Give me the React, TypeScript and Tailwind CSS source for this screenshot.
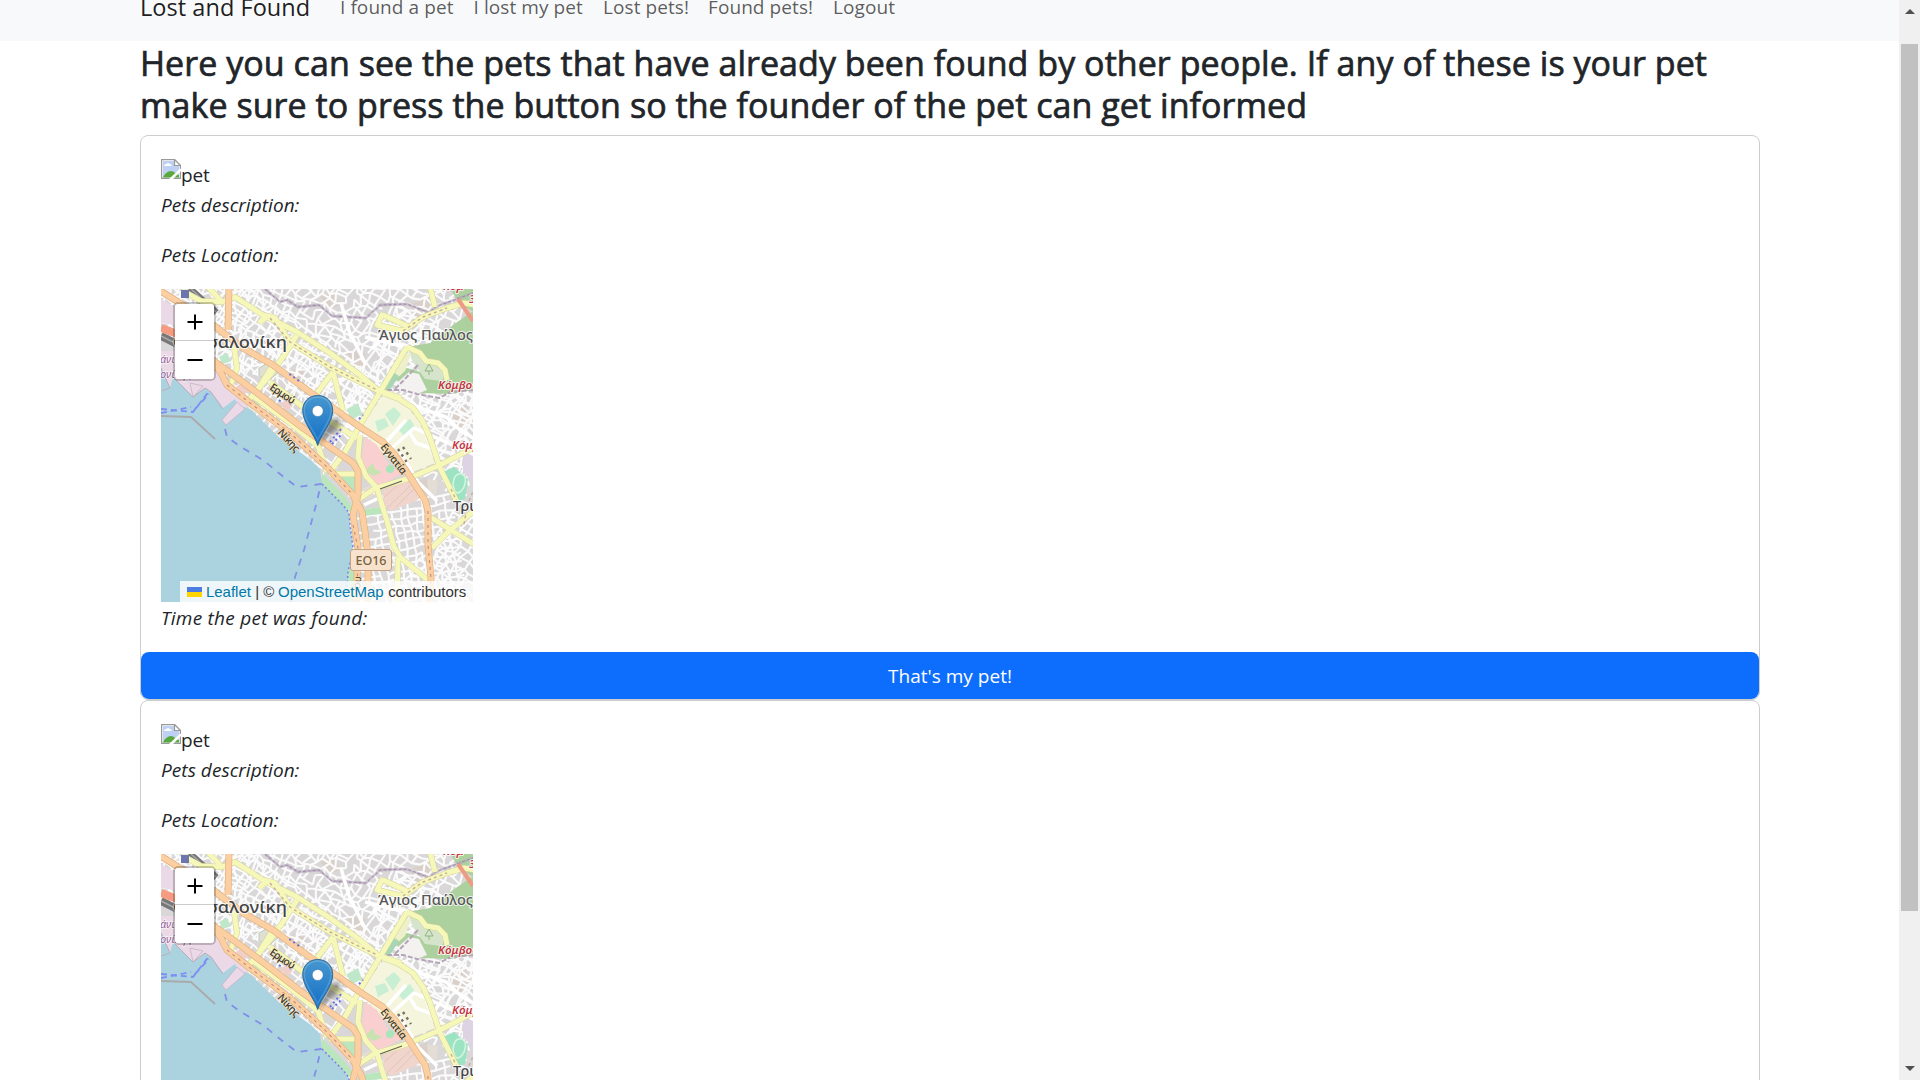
import React from "react";

const navLinks = [
  { label: "I found a pet", width: "w-[133.5px]" },
  { label: "I lost my pet", width: "w-[129.5px]" },
  { label: "Lost pets!", width: "w-[105px]" },
  { label: "Found pets!", width: "w-[125px]" },
  { label: "Logout", width: "w-[70px]" },
];

function makeRandom(seed: number) {
  let s = seed;
  return () => {
    s = (s * 1664525 + 1013904223) % 4294967296;
    return s / 4294967296;
  };
}

// Irregular street grid: jittered lattice points, rotated into place.
function streetGrid(cx: number, cy: number, w: number, h: number, angle: number, step: number, jitter: number, seed: number) {
  const rnd = makeRandom(seed);
  const cols = Math.ceil(w / step);
  const rows = Math.ceil(h / step);
  const a = (angle * Math.PI) / 180;
  const pts: string[][] = [];
  for (let r = 0; r <= rows; r++) {
    const row: string[] = [];
    for (let c = 0; c <= cols; c++) {
      const x = c * step - w / 2 + (rnd() - 0.5) * jitter;
      const y = r * step - h / 2 + (rnd() - 0.5) * jitter;
      row.push(`${(cx + x * Math.cos(a) - y * Math.sin(a)).toFixed(1)} ${(cy + x * Math.sin(a) + y * Math.cos(a)).toFixed(1)}`);
    }
    pts.push(row);
  }
  let d = "";
  for (let r = 0; r < rows; r++) {
    for (let c = 0; c < cols; c++) {
      if (rnd() > 0.14) d += `M${pts[r][c]}L${pts[r][c + 1]}`;
      if (rnd() > 0.14) d += `M${pts[r][c]}L${pts[r + 1][c]}`;
    }
  }
  return d;
}

const hillStreets = streetGrid(170, 30, 380, 170, 24, 7.5, 7, 11);
const centreStreets = streetGrid(120, 90, 190, 110, 35, 8, 3, 5);
const eastStreets = streetGrid(270, 110, 150, 130, 30, 8.5, 7, 23);
const southStreets = streetGrid(240, 270, 120, 110, -10, 7.5, 3, 41);
const southEastStreets = streetGrid(296, 275, 64, 110, 35, 8, 4, 17);

const trunkRoads = [
  "M-2 1L14 11L52 36L82 59L112 76L146 101L172 119L199 138L222 153L234 166L246 183L264 211L267 222L267 256L270 289L269 314",
  "M50 70L79 91L112 116L142 139L169 158L192 174L197 182L197 206L192 226L197 259L196 289L195 314",
  "M52 73L60 84L66 96L89 114L129 144L166 178L192 206L201 223L204 243L207 266L207 314",
  "M68 -2L67 41",
];

const yellowRoads = [
  "M47 -2L61 13L74 8L102 26L136 43L169 64L199 86L219 103",
  "M102 26L114 29L129 53L169 78L216 101L240 109",
  "M72 50L76 79L69 98",
  "M136 46L122 68L109 86L86 113",
  "M112 76L92 108",
  "M172 83L182 122M172 83L156 104",
  "M246 58L235 76L219 103L199 136L184 163L169 183",
  "M246 58L259 64L265 72L277 74L284 81L286 91",
  "M222 24L216 36L242 42L262 28L286 19L303 14L314 16M222 26L246 37",
  "M269 -2L274 18",
  "M222 104L238 110L252 119L262 133L269 149L279 179L296 213",
  "M216 199L246 190L279 176L314 158",
  "M199 146L197 168L205 187L216 199L221 216L226 232L233 258L240 269L267 291",
  "M168 185L197 185M198 210L216 198",
  "M314 221L287 243L271 259M269 228L314 256",
  "M236 314L237 269",
  "M92 107L129 134L157 157L166 183",
  "M109 93L142 118L168 132L196 149",
  "M22 2L40 12L60 13M105 28L98 34",
];

const avenues = ["M225 153L245 131M231 159L253 139L278 150L296 158L314 166", "M248 142L255 154L272 160L278 150", "M203 216L222 207M187 206L214 203", "M239 163L257 193L276 212", "M180 14L188 42L205 76M204 48L246 58M210 60L240 35", "M240 110L262 120L285 128L300 142L314 150"];

const boundary = "M104 0L119 13L126 11L137 18L158 16L171 27L205 29L219 16L246 15L269 24L274 18L312 4";

type MapProps = { clip: string; shifted?: boolean };

function StreetMap({ clip, shifted }: MapProps) {
  return (
    <svg className="block h-[313px] w-[312px]" viewBox="0 0 312 313">
      <defs>
        <clipPath id={clip}>
          <rect width="312" height="313" />
        </clipPath>
        <filter id={`${clip}-soft`} x="0" y="0" width="1" height="1">
          <feGaussianBlur stdDeviation="0.55" />
        </filter>
        <linearGradient id={`${clip}-pin`} x1="0" y1="0" x2="0" y2="1">
          <stop offset="0" stopColor="#4797cf" />
          <stop offset="1" stopColor="#126fc6" />
        </linearGradient>
        <filter id={`${clip}-shade`} x="-50%" y="-50%" width="200%" height="200%">
          <feGaussianBlur stdDeviation="2.5" />
        </filter>
      </defs>
      <g clipPath={`url(#${clip})`}>
        <g filter={`url(#${clip}-soft)`} fill="none" strokeLinejoin="round">
          <rect width="312" height="313" fill="#d9d7d7" />
          <g fill="#d9d0c9">
            <path d="M249 15l16-5 8 12-18 9zM128 84l10-6 8 8-10 7zM247 198l18-10 8 8-12 12zM160 8l12-5 8 13-12 4zM186 63l17 1 4 14-14 2zM290 122l14-7 8 20-14 8z" />
          </g>
          <g stroke="#fbfbfb">
            <path d={hillStreets} strokeWidth="2.1" />
            <path d={centreStreets} strokeWidth="1.9" />
            <path d={eastStreets} strokeWidth="2.1" />
            <path d={southStreets} strokeWidth="2.1" />
            <path d={southEastStreets} strokeWidth="2.1" />
          </g>
          <path d="M312 22L292 36L269 54L246 58L253 66L260 73L263 84L246 79L234 90L259 104L289 105L312 101ZM288 -2H314V24L298 14Z" fill="#add19e" />
          <path d="M246 58l14 7 5 9 12 2 7 9-3 7-17-2-12-17z" fill="#d6e4cb" />
          <path d="M238 92l10-9 10 2 8 16-10 4-18-4z" fill="#f3f2f1" />
          <path d="M241 66l9-2-6 18-11 10-4-3z" fill="#edf0c9" />
          <path d="M222 91l10-8 6 4-9 14-10 0z" fill="#a7d6b5" />
          <path d="M222 107l20 6 17 21 15 40-27 11-35-30-12-19z" fill="#f4f5dc" />
          <path d="M224 125l9-7 7 7-8 12zM214 132l10-3 4 8-11 6zM236 139l13-9 5 8-10 10z" fill="#c8efd4" />
          <path d="M204 148L216 156L229 178L242 184L216 198L206 185L200 172Z" fill="#f9d0cf" />
          <path d="M204 182l8-8 2 6 7 3-8 4z" fill="#c6e3b0" />
          <path d="M222 201L245 192L258 198L264 206L254 212L230 222L223 216Z" fill="#f0d5cd" />
          <path d="M225 220l26-25M235 218l20-20M223 208l13-11" stroke="#e2bdb6" strokeWidth="0.8" />
          <path d="M201 200l12-5 4 11-15 5zM266 190l11 2-2 15-7 2z" fill="#e4ddd6" />
          <path d="M164 183L194 185L193 203ZM161 184L182 206L193 220L190 224L161 198ZM199 221l20-3 2 7-20 2zM187 274l7-2 1 41h-9z" fill="#b9e6bd" />
          <path d="M280 184l13-6 14 12-3 20-10 4z" fill="#9be3c2" />
          <path d="M292 196q1-13 9-11 6 3 2 13-4 8-9 5z" fill="#9be3c2" stroke="#d5f5e0" strokeWidth="1.6" />
          <circle cx="229" cy="180" r="4" fill="#a9e5bb" />
          <path d="M186 120l11-6 4 11-11 6zM88 116l8-4 3 4-9 4zM58 68l8-4 4 8-8 3z" fill="#bfe8ca" />
          <path d="M75 98l6-5 7 9-7 5zM119 115l6-4 7 6-7 5z" fill="#f1cfc9" />
          <path d="M98 79l9-5 10 10-9 7-10-4z" fill="#dfe0d3" stroke="#c2ccba" />
          <path d="M0 62h14l40 8 12 26 22 20-24 18-38-23-12-10L0 90z" fill="#ebd9e7" />
          <path d="M302 165l12-9v40l-12-13z" fill="#ded3e2" />
          <path d="M0 10L14 18V36L0 34Z" fill="#ebd9e7" />
          <path d="M0 47L20 57M28 0l27 24" stroke="#777" strokeWidth="8" />
          <path d="M0 47l22 11M30 0l25 23" stroke="#aaa" strokeWidth="1.4" />
          <path d="M0 39l22 8" stroke="#f59b82" strokeWidth="8" />
          <path d="M0 78L9 99L0 101ZM0 101L9 99L12 88L32 108L44 99L50 103L62 119L74 110L77 116L61 131L65 136L83 118L89 120L119 149L150 171L159 180L161 195L182 216L188 224L189 236L192 259L187 283L185 314H-2V100Z" fill="#aad3df" />
          <path d="M32 108L29 94L42 97ZM61 131L65 136L84 120L76 113Z" fill="#ebd9e7" stroke="#c5b3c5" strokeWidth="0.8" />
          <path d="M12 88L32 108L44 99L50 103L62 120M0 79L9 99L0 102" stroke="#bbadba" strokeWidth="1" />
          <path d="M0 127L30 128L54 150" stroke="#aaa" strokeWidth="1.8" />
          <path d="M161 195L182 216L188 224L189 236L192 259L187 283L185 313" stroke="#8380e8" strokeWidth="1.6" strokeDasharray="2 2.5" />
          <path d="M0 120L32 123L49 101M0 124L30 118M34 120L48 105" stroke="#7d8ff2" strokeWidth="1.9" strokeDasharray="6 4" />
          <path d="M64 140L66 148L80 158L102 171L119 185L136 198L160 195L155 216L143 261L134 288L130 313" stroke="#828fe8" strokeWidth="1.8" strokeDasharray="7 7" />
          <path d={boundary} stroke="#b4a3bb" strokeWidth="2.8" opacity="0.6" />
          <path d={boundary} stroke="#9d8ba9" strokeWidth="1" strokeDasharray="3 2" />
          <path d="M226 101L242 101L256 105L278 109L290 103L312 101M257 76L242 92L233 101" stroke="#b3a4b8" strokeWidth="2" strokeDasharray="5 2" />
          {avenues.map((d) => (
            <path key={d} d={d} stroke="#fff" strokeWidth="3.5" />
          ))}
          <g stroke="#d7d29a" strokeWidth="6">
            {yellowRoads.map((d) => (
              <path key={d} d={d} />
            ))}
          </g>
          <g stroke="#f5f8b9" strokeWidth="5">
            {yellowRoads.map((d) => (
              <path key={d} d={d} />
            ))}
          </g>
          <path d="M109 29L129 53L169 78L216 101M242 42L262 28L286 19M290 200L296 213M314 198L307 214L303 235" stroke="#c8ab9a" strokeWidth="1.4" strokeDasharray="3 3" />
          <g stroke="#dfad78" strokeWidth="6.8">
            {trunkRoads.map((d) => (
              <path key={d} d={d} />
            ))}
          </g>
          <g stroke="#fbcfa2" strokeWidth="5.6">
            {trunkRoads.map((d) => (
              <path key={d} d={d} />
            ))}
          </g>
          <path d="M66 96L89 114L129 144L166 178L192 206M267 222L267 256L270 289L269 313M192 236L197 259L196 313" stroke="#bd8d7b" strokeWidth="1.1" strokeDasharray="3 4" />
          <path d="M297 10l15 22" stroke="#ef9b83" strokeWidth="4" />
          <path d="M169 153l12-14M130 115l-10-9M138 92l-11-8M118 111l4 3M171 155l10-10M198 130l4-4" stroke="#676fe9" strokeWidth="2" strokeDasharray="2 3" />
          <path d="M219 200l22-8" stroke="#625d56" strokeWidth="1.2" />
          <path d="M237 160l10 15M242 158l8 12" stroke="#736d64" strokeWidth="2.4" strokeDasharray="2.5 4" />
          <rect x="20" y="1" width="8" height="8" fill="#6c75ad" />
          <path d="M268 75l-4 7h8zM268 82v4" stroke="#8cb77f" strokeWidth="1" />
        </g>
        <g fontFamily="'Noto Sans', 'Open Sans', sans-serif" stroke="#fff" strokeOpacity="0.8" paintOrder="stroke" strokeLinejoin="round">
          <text x="12" y="59" fontSize="17" fontWeight="500" textLength="114" lengthAdjust="spacingAndGlyphs" fill="#444" strokeWidth="2">Θεσσαλονίκη</text>
          <text x="217" y="51" fontSize="14" fontWeight="500" textLength="95" lengthAdjust="spacingAndGlyphs" fill="#555" strokeWidth="2">Άγιος Παύλος</text>
          <text x="292" y="222" fontSize="14.5" fontWeight="500" fill="#444" strokeWidth="2">Τρια</text>
          <g fill="#c63442" fontSize="11.5" fontStyle="italic" fontWeight="600" strokeWidth="2">
            <text x="277" y="100">Κόμβος</text>
            <text x="291" y="160">Κόμβος</text>
            <text x="282" y="1">Κόμ</text>
            <text x="308" y="14">3</text>
          </g>
          <g fill="#965d96" fontSize="11" fontStyle="italic" strokeWidth="1.5">
            <text x="-1" y="74">άνια</text>
            <text x="-1" y="89">ονίκης</text>
          </g>
          <g fill="#40352a" fontSize="10.5" strokeWidth="1" stroke="#f7e6b7">
            <text transform="translate(108 100) rotate(34)" textLength="28" fontWeight="500">Ερμού</text>
            <text transform="translate(116 144) rotate(47)" textLength="27" fontWeight="500">Νίκης</text>
            <text transform="translate(219 158) rotate(52)" textLength="36" fontWeight="500">Εγνατία</text>
            <text transform="translate(199 300) rotate(-84)">ου</text>
          </g>
        </g>
        <rect x="189.5" y="260.5" width="41" height="21" rx="2.5" fill="#f7e3cd" stroke="#c5a283" />
        <text x="210" y="276" textAnchor="middle" fontSize="12.5" fontWeight="500" fontFamily="'Noto Sans', sans-serif" fill="#76603f" textLength="31">EO16</text>
        <g transform={shifted ? "translate(0 1)" : undefined}>
          <path d="M157 155L167 130L178 127L180 136Z" fill="#000" opacity="0.38" filter={`url(#${clip}-shade)`} />
          <path d="M156.7 155.5C154 145 141.7 133 141.7 120.5C141.7 111.5 148 105.5 156.7 105.5S171.7 111.5 171.7 120.5C171.7 133 159.5 145 156.7 155.5Z" fill={`url(#${clip}-pin)`} stroke="#2e6c97" />
          <path d="M156.7 150C154.5 143 143.2 131 143.2 120.5C143.2 112 149.5 107 156.7 107S170.2 112 170.2 120.5C170.2 131 159 143 156.7 150Z" fill="none" stroke="#fff" strokeOpacity="0.18" strokeWidth="1.3" />
          <circle cx="156.7" cy="121" r="5.5" fill="#fff" stroke="#2e6c97" strokeOpacity="0.7" strokeWidth="0.7" />
        </g>
      </g>
    </svg>
  );
}

function ZoomControl({ shifted }: { shifted?: boolean }) {
  return (
    <div className={`absolute left-[12px] w-[43px] overflow-hidden rounded-[5px] border-[2.5px] border-black/20 bg-clip-padding ${shifted ? "top-[13px]" : "top-[12px]"}`}>
      <button className="flex h-[37px] w-full items-center justify-center border-b border-[#ccc] bg-white">
        <svg className="size-[16px]" viewBox="0 0 16 16" stroke="#000" strokeWidth="2">
          <path d="M0.5 8H15.5M8 0.5V15.5" />
        </svg>
      </button>
      <button className="flex h-[38px] w-full items-center justify-center bg-white">
        <svg className="size-[16px]" viewBox="0 0 16 16" stroke="#000" strokeWidth="2">
          <path d="M0.5 8H15.5" />
        </svg>
      </button>
    </div>
  );
}

function Attribution() {
  return (
    <div className="absolute right-0 bottom-0 flex h-[21px] w-[293px] items-center bg-white/80 pl-[7px] font-['Liberation_Sans',sans-serif] text-[15px] leading-[21px] tracking-[-0.03px] whitespace-pre text-[#333]">
      <div className="mr-[4px] h-[10px] w-[15px] shrink-0 bg-[#4c7be1]">
        <div className="mt-[5px] h-[5px] bg-[#ffd500]" />
      </div>
      <a className="w-[45px] text-[#0078a8]">Leaflet</a>
      <span className="w-[27px]"> | © </span>
      <a className="w-[106px] text-[#0078a8]">OpenStreetMap</a>
      <span> contributors</span>
    </div>
  );
}

function BrokenImage() {
  return (
    <svg className="size-[20px] shrink-0" viewBox="0 0 20 20">
      <path d="M0.6 0.6H13.5L19.4 6.5V19.4H0.6Z" fill="#fff" stroke="#999" strokeWidth="1.3" />
      <path d="M2 2H13V7H18V18.5H2Z" fill="#bdd1f4" />
      <path d="M3 7Q3 5 5.5 5Q7 2.8 8.5 5Q11 5.2 10.5 7Z" fill="#fff" />
      <path d="M2 18.5Q5 12 10 12Q13 12 15 15L18 16V18.5Z" fill="#58a83c" />
      <path d="M13.5 0.6V6.5H19.4Z" fill="#fff" stroke="#999" strokeWidth="1.2" />
      <path d="M20 9.5V12L12 20H8L17 11.5Z" fill="#fff" />
    </svg>
  );
}

function PetCard({ id, shifted }: { id: string; shifted?: boolean }) {
  return (
    <article className="flex h-[565px] shrink-0 flex-col rounded-[8px] border border-[#cdcdce]">
      <div className="flex flex-1 flex-col px-[20px] pt-[23px] text-[19px] leading-[30px]">
        <div className="flex h-[27px] items-start">
          <BrokenImage />
          <span className="pt-[2px] leading-[28px] tracking-[-0.1px]">pet</span>
        </div>
        <p className="h-[50px] pt-[4px] tracking-[0.05px] italic">Pets description:</p>
        <p className="h-[53px] pt-[4px] tracking-[0.1px] italic">Pets Location:</p>
        <div className="relative h-[313px] w-[312px]">
          <StreetMap clip={id} shifted={shifted} />
          <ZoomControl shifted={shifted} />
          <Attribution />
        </div>
        <p className="pt-px tracking-[0.27px] italic">Time the pet was found:</p>
      </div>
      <button className="h-[47px] rounded-[8px] bg-[#0d6efd] pt-px text-[19px] tracking-[0.02px] text-white">That's my pet!</button>
    </article>
  );
}

function Scrollbar() {
  return (
    <div className="flex w-[21px] shrink-0 flex-col items-center bg-[#f0f0f0]">
      <svg className="mt-[9px] h-[5px] w-[10px]" viewBox="0 0 10 5">
        <path d="M5 0L10 5H0Z" fill="#505050" />
      </svg>
      <div className="mt-[30px] h-[867px] w-[17px] bg-[#c1c1c1]" />
      <svg className="mt-auto mb-[9px] h-[5px] w-[10px]" viewBox="0 0 10 5">
        <path d="M0 0H10L5 5Z" fill="#505050" />
      </svg>
    </div>
  );
}

export default function App() {
  return (
    <div className="flex h-[1080px] w-[1920px] overflow-hidden bg-white font-['Open_Sans','Noto_Sans',sans-serif] text-[#212529]">
      <div className="flex min-w-0 flex-1 flex-col overflow-hidden">
        <nav className="flex h-[41px] shrink-0 items-start bg-[#f8f9fa] pl-[140px] whitespace-nowrap">
          <a className="-mt-[10px] w-[200px] text-[23.5px] leading-[34px] tracking-[0.05px] text-black/90">Lost and Found</a>
          {navLinks.map((link) => (
            <a key={link.label} className={`-mt-[8px] text-[19px] leading-[30px] tracking-[0.08px] text-black/65 ${link.width}`}>
              {link.label}
            </a>
          ))}
        </nav>
        <main className="flex w-[1760px] shrink-0 flex-col pl-[140px]">
          <h3 className="h-[94px] pt-[1px] text-[34px] leading-[42px] font-normal tracking-[0.05px] whitespace-nowrap [-webkit-text-stroke:0.7px_#212529]">
            Here you can see the pets that have already been found by other people. If any of these is your pet
            <br />
            make sure to press the button so the founder of the pet can get informed
          </h3>
          <PetCard id="map-a" shifted />
          <PetCard id="map-b" />
        </main>
      </div>
      <Scrollbar />
    </div>
  );
}
